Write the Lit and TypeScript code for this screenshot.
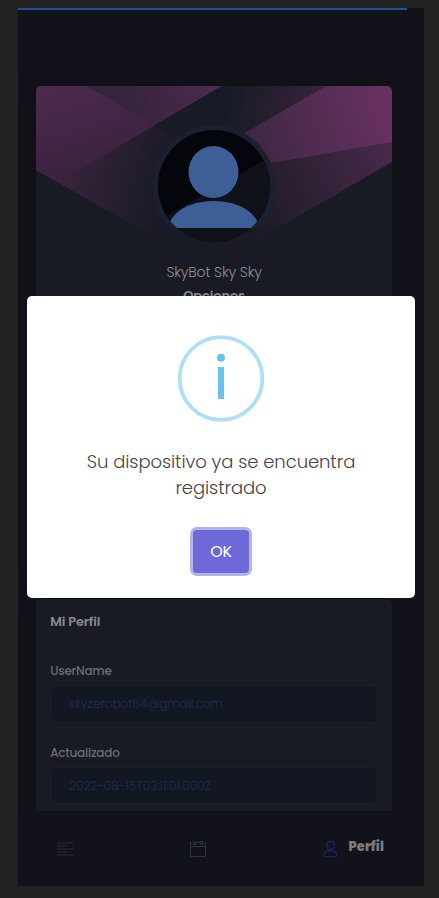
import { LitElement, html, svg, css } from "lit";
import { customElement, property } from "lit/decorators.js";

@customElement("profile-cover")
class ProfileCover extends LitElement {
  static styles = css`
    :host { display: block; height: 170px; }
    svg { display: block; }
  `;
  grad(id: string, x1: number, y1: number, x2: number, y2: number, a: string, b: string) {
    return svg`<linearGradient id=${id} gradientUnits="userSpaceOnUse" x1=${x1} y1=${y1} x2=${x2} y2=${y2}>
      <stop offset="0" stop-color=${a}/><stop offset="1" stop-color=${b}/></linearGradient>`;
  }
  render() {
    return html`<svg width="357" height="170" viewBox="0 0 357 170">
      <defs>
        ${this.grad("a", 20, 0, 50, 95, "#4d294d", "#38233d")}
        ${this.grad("b", 90, 20, 180, 0, "#35243b", "#4e2a4f")}
        ${this.grad("c", 20, 80, 130, 110, "#3a253e", "#181a24")}
        ${this.grad("d", 192, 10, 290, 20, "#181b25", "#37243c")}
        ${this.grad("e", 215, 60, 345, 20, "#3f2743", "#663061")}
        ${this.grad("f", 215, 135, 357, 65, "#1b1b26", "#48294b")}
        <clipPath id="photo"><circle cx="178" cy="100" r="56"/></clipPath>
        <clipPath id="upper"><rect width="357" height="142"/></clipPath>
      </defs>
      <path fill="url(#c)" d="M0 84 119 39 142 52 160 100 133 159.400Z"/>
      <path fill="url(#a)" d="M0 0H52L119 39 21.500 96.200 0 84Z"/>
      <path fill="url(#b)" d="M52 0H186L119 39Z"/>
      <path fill="url(#d)" d="M186 0H290L209 47 160 60 142 52 119 39Z"/>
      <path fill="url(#f)" d="M220 80 357 56V75.500L197 168 190 140Z"/>
      <path fill="url(#e)" d="M290 0H357V56L236 77 200 82 200 52Z"/>
      <circle cx="178" cy="100" r="58.500" fill="none" stroke="#1a2030" stroke-width="5" clip-path="url(#upper)"/>
      <g clip-path="url(#photo)">
        <rect x="120" y="42" width="118" height="116" fill="#05060b"/>
        <path d="M110 142 246 64V160H110Z" fill="#111219"/>
        <g clip-path="url(#upper)" fill="#3e5e97">
          <ellipse cx="177.500" cy="86" rx="25" ry="26"/>
          <ellipse cx="177.700" cy="142.500" rx="45" ry="27.500"/>
        </g>
      </g>
    </svg>`;
  }
}

@customElement("read-field")
class ReadField extends LitElement {
  @property() label = "";
  @property() value = "";
  static styles = css`
    :host { display: block; }
    .label { height: 20px; line-height: 20px; font-size: 12px; font-weight: 500; color: #6b6c71; letter-spacing: -.22px; }
    .box {
      box-sizing: border-box; height: 37.500px; margin-top: 4px; padding: 0 18px;
      border: 1px solid #1a202c; border-radius: 6px; background: #131722;
      font-size: 12px; line-height: 35px; font-weight: 300; color: #202d54;
    }
  `;
  render() {
    return html`<div class="label">${this.label}</div><div class="box">${this.value}</div>`;
  }
}

@customElement("app-root")
class AppRoot extends LitElement {
  static styles = css`
    :host {
      display: block; box-sizing: border-box; width: 439px; height: 898px;
      padding: 8px 15px 12px 18px; background: #222;
      font-family: Poppins, Inter, "Open Sans", sans-serif;
    }
    .screen {
      position: relative; display: flex; flex-direction: column;
      height: 878px; background: #12121b; overflow: hidden;
    }
    .progress { flex: none; width: 389px; height: 2px; background: #24508f; }
    .content { flex: 1; min-height: 0; overflow: hidden; padding: 76px 13.500px 0 17.700px; }
    .card {
      box-sizing: border-box; width: 356.800px; background: #181a24;
      border-radius: 5px; overflow: hidden; box-shadow: 0 0 14px 5px #111217;
    }
    .summary { height: 494px; text-align: center; }
    .name { margin-top: 6px; line-height: 20px; font-size: 14px; font-weight: 300; color: #909095; letter-spacing: -.12px; }
    .options { margin-top: 4px; line-height: 20px; font-size: 13px; font-weight: 600; color: #8a8a8e; letter-spacing: -.1px; }
    .details { height: 240px; margin-top: 19px; padding: 13px 14.300px 0 14.500px; }
    .title { height: 20px; line-height: 20px; font-size: 13px; font-weight: 600; color: #88888d; letter-spacing: -.15px; }
    .username { margin-top: 29px; }
    .updated { margin-top: 20px; letter-spacing: .09px; }
    .nav {
      flex: none; box-sizing: border-box; height: 75px; padding: 28px 40px 0 38px;
      display: flex; justify-content: space-between; align-items: flex-start;
    }
    .nav svg { display: block; }
    .active { display: flex; gap: 10.500px; }
    .tab { margin-top: -2px; line-height: 20px; font-size: 13px; font-weight: 800; color: #7c7c80; letter-spacing: .1px; }
    .modal {
      position: absolute; left: 9px; top: 288px; width: 388px; height: 302px;
      box-sizing: border-box; padding-top: 39px; background: #fff; border-radius: 5px;
      display: flex; flex-direction: column; align-items: center;
    }
    .message {
      width: 330px; margin-top: 26px; text-align: center; color: #454545;
      font-size: 18px; line-height: 26px; font-weight: 300; letter-spacing: -.08px;
    }
    .ok {
      box-sizing: border-box; width: 56px; height: 43px; margin-top: 29px; padding: 0;
      border: 0; border-radius: 4px; background: #6e69d8; box-shadow: 0 0 0 3px #b5b2ec;
      color: #fff; font: 400 16px/43px Poppins, Inter, sans-serif; letter-spacing: -.3px;
    }
  `;
  render() {
    return html`<div class="screen">
      <div class="progress"></div>
      <main class="content">
        <section class="card summary">
          <profile-cover></profile-cover>
          <div class="name">SkyBot Sky Sky</div>
          <div class="options">Opciones</div>
        </section>
        <section class="card details">
          <div class="title">Mi Perfil</div>
          <read-field class="username" label="UserName" value="skyzerobot64@gmail.com"></read-field>
          <read-field class="updated" label="Actualizado" value="2022-08-15T03:11:01.000Z"></read-field>
        </section>
      </main>
      <nav class="nav">
        <svg width="18" height="20" viewBox="0 0 18 20" fill="#1e1f2a">
          <path d="M1 3h16.500v2H1zM1 6h9.500v2H1zM1 9h16.500v2H1zM1 12h9.500v2H1zM1 15h16.500v2H1z"/>
        </svg>
        <svg width="18" height="20" viewBox="0 0 18 20" fill="none" stroke="#2b3346">
          <path d="M3.500 3.500H1.500V17.500H16.500V3.500H14.500M6.500 3.500H11.500M1.500 7.500H16.500"/>
          <path d="M4.500 2.500h2v3h-2zM11.500 2.500h2v3h-2z"/>
        </svg>
        <div class="active">
          <svg width="15" height="20" viewBox="0 0 15 20" fill="none" stroke="#1a2466" stroke-width="1.200">
            <ellipse cx="7.500" cy="6.500" rx="3.900" ry="4.200"/>
            <path d="M3.500 12H11.500Q14 14 14 16.500 13.500 17.500 12 17.500H3Q1.500 17.500 1 16.500 1 14 3.500 12Z"/>
          </svg>
          <span class="tab">Perfil</span>
        </div>
      </nav>
      <div class="modal" role="dialog">
        <svg width="88" height="88" viewBox="0 0 88 88">
          <circle cx="44" cy="43.500" r="41.400" fill="none" stroke="#addff5" stroke-width="3.800"/>
          <circle cx="44" cy="22.700" r="4" fill="#6ac1ee"/>
          <rect x="41" y="32" width="6" height="32" fill="#6ac1ee"/>
        </svg>
        <div class="message">Su dispositivo ya se encuentra registrado</div>
        <button class="ok">OK</button>
      </div>
    </div>`;
  }
}
